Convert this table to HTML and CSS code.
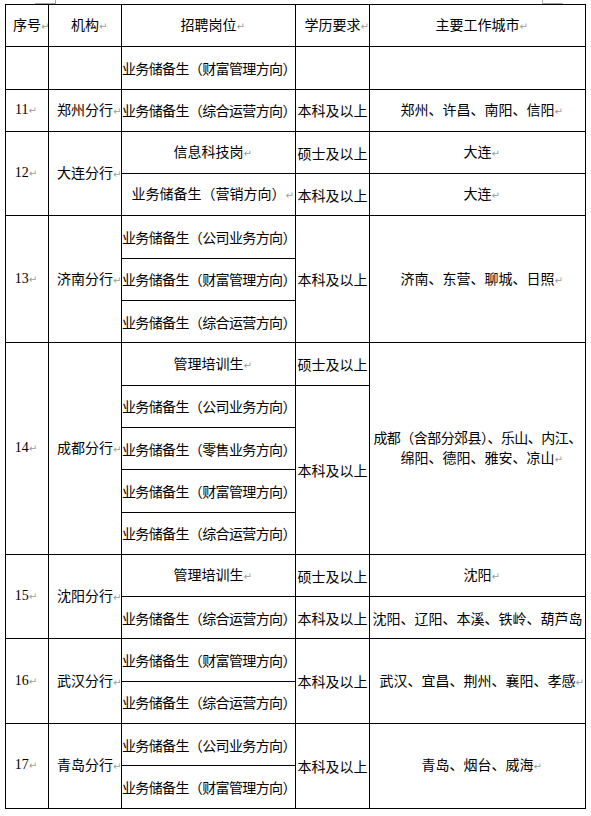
FILE: index.html
```html
<!DOCTYPE html>
<html lang="zh-CN">
<head>
<meta charset="utf-8">
<title>招聘岗位表</title>
<link rel="stylesheet" href="styles.css">
</head>
<body>
<div class="page">
  <div class="corner corner-left"></div>
  <div class="corner corner-right"></div>
  <table class="jobs">
    <colgroup>
      <col class="c-no"><col class="c-org"><col class="c-pos"><col class="c-edu"><col class="c-city">
    </colgroup>
    <tr>
      <td>序号<span class="m">↵</span></td>
      <td>机构<span class="m">↵</span></td>
      <td>招聘岗位<span class="m">↵</span></td>
      <td>学历要求<span class="m">↵</span></td>
      <td>主要工作城市<span class="m">↵</span></td>
    </tr>
    <tr>
      <td></td>
      <td></td>
      <td class="fit">业务储备生（财富管理方向）</td>
      <td></td>
      <td></td>
    </tr>
    <tr>
      <td class="num">11<span class="mi">↵</span></td>
      <td>郑州分行<span class="m">↵</span></td>
      <td class="fit">业务储备生（综合运营方向）</td>
      <td>本科及以上</td>
      <td>郑州、许昌、南阳、信阳<span class="m">↵</span></td>
    </tr>
    <tr>
      <td class="num" rowspan="2">12<span class="mi">↵</span></td>
      <td rowspan="2">大连分行<span class="m">↵</span></td>
      <td>信息科技岗<span class="m">↵</span></td>
      <td>硕士及以上</td>
      <td>大连<span class="m">↵</span></td>
    </tr>
    <tr>
      <td>业务储备生（营销方向）<span class="m">↵</span></td>
      <td>本科及以上</td>
      <td>大连<span class="m">↵</span></td>
    </tr>
    <tr>
      <td class="num" rowspan="3">13<span class="mi">↵</span></td>
      <td rowspan="3">济南分行<span class="m">↵</span></td>
      <td class="fit">业务储备生（公司业务方向）</td>
      <td rowspan="3">本科及以上</td>
      <td rowspan="3">济南、东营、聊城、日照<span class="m">↵</span></td>
    </tr>
    <tr>
      <td class="fit">业务储备生（财富管理方向）</td>
    </tr>
    <tr>
      <td class="fit">业务储备生（综合运营方向）</td>
    </tr>
    <tr>
      <td class="num" rowspan="5">14<span class="mi">↵</span></td>
      <td rowspan="5">成都分行<span class="m">↵</span></td>
      <td>管理培训生<span class="m">↵</span></td>
      <td>硕士及以上</td>
      <td rowspan="5" class="multi"><span class="fit-line">成都（含部分郊县）、乐山、内江、</span><br>绵阳、德阳、雅安、凉山<span class="m">↵</span></td>
    </tr>
    <tr>
      <td class="fit">业务储备生（公司业务方向）</td>
      <td rowspan="4">本科及以上</td>
    </tr>
    <tr>
      <td class="fit">业务储备生（零售业务方向）</td>
    </tr>
    <tr>
      <td class="fit">业务储备生（财富管理方向）</td>
    </tr>
    <tr>
      <td class="fit">业务储备生（综合运营方向）</td>
    </tr>
    <tr>
      <td class="num" rowspan="2">15<span class="mi">↵</span></td>
      <td rowspan="2">沈阳分行<span class="m">↵</span></td>
      <td>管理培训生<span class="m">↵</span></td>
      <td>硕士及以上</td>
      <td>沈阳<span class="m">↵</span></td>
    </tr>
    <tr>
      <td class="fit">业务储备生（综合运营方向）</td>
      <td>本科及以上</td>
      <td>沈阳、辽阳、本溪、铁岭、葫芦岛</td>
    </tr>
    <tr>
      <td class="num" rowspan="2">16<span class="mi">↵</span></td>
      <td rowspan="2">武汉分行<span class="m">↵</span></td>
      <td class="fit">业务储备生（财富管理方向）</td>
      <td rowspan="2">本科及以上</td>
      <td rowspan="2">武汉、宜昌、荆州、襄阳、孝感<span class="m">↵</span></td>
    </tr>
    <tr>
      <td class="fit">业务储备生（综合运营方向）</td>
    </tr>
    <tr>
      <td class="num" rowspan="2">17<span class="mi">↵</span></td>
      <td rowspan="2">青岛分行<span class="m">↵</span></td>
      <td class="fit">业务储备生（公司业务方向）</td>
      <td rowspan="2">本科及以上</td>
      <td rowspan="2">青岛、烟台、威海<span class="m">↵</span></td>
    </tr>
    <tr>
      <td class="fit">业务储备生（财富管理方向）</td>
    </tr>
  </table>
</div>
</body>
</html>
```

FILE: styles.css
```css
html, body {
  margin: 0;
  padding: 0;
  background: #fff;
}

.page {
  position: relative;
  width: 591px;
  height: 816px;
  padding: 4px 0 0 5px;
  box-sizing: border-box;
  font-family: "Noto Sans CJK SC", "Noto Sans", sans-serif;
  font-size: 14px;
  color: #000;
}

.corner {
  position: absolute;
  top: 0;
  height: 3px;
  border-bottom: 1px solid #a8a8a8;
}

.corner-left {
  left: 35px;
  width: 20px;
  border-right: 1px solid #a8a8a8;
}

.corner-right {
  left: 542px;
  width: 20px;
  border-left: 1px solid #a8a8a8;
}

.jobs {
  border-collapse: collapse;
  table-layout: fixed;
  width: 581px;
}

.c-no { width: 43px; }
.c-org { width: 73px; }
.c-pos { width: 174px; }
.c-edu { width: 74px; }
.c-city { width: 216px; }

.jobs tr {
  height: 42.3px;
}

.jobs td {
  border: 1px solid #000;
  padding: 0;
  text-align: center;
  vertical-align: middle;
  white-space: nowrap;
  overflow: hidden;
  line-height: 18px;
}

.jobs td.multi {
  line-height: 20px;
}

.jobs td.fit {
  letter-spacing: -0.63px;
  text-align: left;
}

.fit-line {
  letter-spacing: -0.55px;
}

.jobs td.num {
  font-family: "Liberation Serif", "Times New Roman", serif;
  font-size: 14px;
  padding-right: 2px;
}

.m, .mi {
  font-family: "DejaVu Sans", sans-serif;
  font-size: 10px;
  color: #9c9c9c;
  letter-spacing: 0;
}

.m {
  display: inline-block;
  width: 0;
  overflow: visible;
  white-space: nowrap;
}
```
